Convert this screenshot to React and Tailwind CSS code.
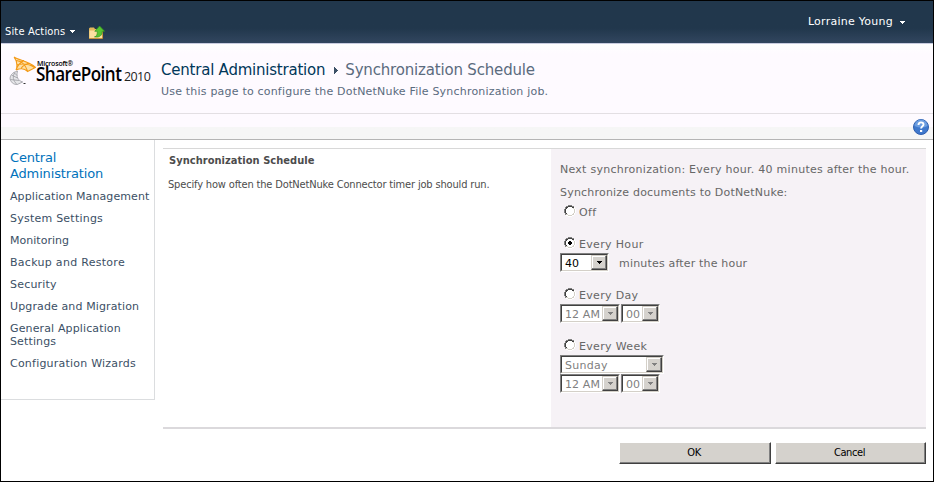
import React from 'react';

const navItems = [
  { label: 'Application Management', cls: 'tracking-[0.09px]' },
  { label: 'System Settings', cls: 'tracking-[0.23px]' },
  { label: 'Monitoring', cls: 'tracking-[0.02px]' },
  { label: 'Backup and Restore', cls: 'tracking-[0.29px]' },
  { label: 'Security', cls: 'tracking-[0.2px]' },
  { label: 'Upgrade and Migration', cls: 'tracking-[0.12px]' },
  { label: 'General Application Settings', cls: 'tracking-[0.13px]' },
  { label: 'Configuration Wizards', cls: 'tracking-[0.22px]' },
];

function Caret({ className }) {
  return (
    <svg className={className} width="5" height="3" viewBox="0 0 5 3" shapeRendering="crispEdges" fill="currentColor">
      <path d="M0 0h5v1H0zM1 1h3v1H1zM2 2h1v1H2z" />
    </svg>
  );
}

function Radio({ checked }) {
  return (
    <svg width="12" height="12" viewBox="0 0 12 12" shapeRendering="crispEdges" className="shrink-0">
      <path d="M4 1h4v1h2v2h1v4h-1v2H8v1H4v-1H2V8H1V4h1V2h2z" fill="#fff" />
      <path d="M4 0h4v1H4zM2 1h2v1H2zM8 1h2v1H8zM1 2h1v2H1zM0 4h1v4H0zM1 8h1v2H1z" fill="#808080" />
      <path d="M4 1h4v1H4zM2 2h2v1H2zM8 2h2v1H8zM2 3h1v1H2zM1 4h1v4H1zM2 8h1v1H2z" fill="#404040" />
      <path d="M9 3h1v1H9zM10 4h1v4h-1zM9 8h1v1H9zM8 9h2v1H8zM2 9h2v1H2zM4 10h4v1H4z" fill="#d4d0c8" />
      <path d="M10 2h1v2h-1zM11 4h1v4h-1zM10 8h1v2h-1zM8 10h2v1H8zM4 11h4v1H4zM2 10h2v1H2z" fill="#fff" />
      {checked && <path d="M5 4h2v1h1v2H7v1H5V7H4V5h1z" fill="#000" />}
    </svg>
  );
}

function Select({ value, width, disabled, textClass = '' }) {
  return (
    <div className={`${width} h-[19px] shrink-0 border border-t-[#808080] border-l-[#808080] border-r-white border-b-white`}>
      <div className="flex h-full border border-t-[#404040] border-l-[#404040] border-r-[#d4d0c8] border-b-[#d4d0c8] bg-white">
        <span className={`flex-1 whitespace-nowrap pl-[3px] leading-[17px] ${textClass} ${disabled ? 'text-[#808080]' : 'text-black'}`}>{value}</span>
        <span className="flex h-full w-[16px] items-center justify-center border border-t-[#d4d0c8] border-l-[#d4d0c8] border-r-[#404040] border-b-[#404040] bg-[#d5d2cd] shadow-[inset_-1px_-1px_0_#808080,inset_1px_1px_0_#fff]">
          <Caret className={disabled ? 'text-[#808080]' : 'text-black'} />
        </span>
      </div>
    </div>
  );
}

function Option({ label, checked }) {
  return (
    <div className="flex h-[16px] items-start pl-[4px]">
      <Radio checked={checked} />
      <span className="ml-[3px] whitespace-nowrap pt-px leading-[13px] tracking-[0.33px]">{label}</span>
    </div>
  );
}

function Button({ label, width }) {
  return (
    <button className={`${width} h-[22px] border border-t-white border-l-white border-r-[#404040] border-b-[#404040] bg-[#d5d2cd] pr-[2px] text-center font-['DejaVu_Sans_Condensed','DejaVu_Sans',sans-serif] text-[11px] leading-[20px] tracking-[-0.4px] text-black shadow-[inset_-1px_-1px_0_#808080]`}>
      {label}
    </button>
  );
}

function FolderIcon() {
  return (
    <svg width="17" height="15" viewBox="0 0 17 15">
      <path d="M1 3.500 2 2.500h4l1 1.500h6V13H1z" fill="#e3b75c" />
      <path d="M1.500 5.500H14v8H1.500z" fill="#fbe0a0" />
      <path d="M1 13.500h13.500V6" fill="none" stroke="#c7923a" strokeWidth="1" />
      <path d="M6.500 11.800C9 11.500 9.300 9.500 9.300 6.300H6.800L11.600 1l5 5.300h-2.400c0 4.200-2.700 6.500-7.700 5.500z" fill="#58c431" stroke="#2f9420" strokeWidth=".7" />
    </svg>
  );
}

function SharePointMark() {
  return (
    <svg width="27" height="30" viewBox="0 0 27 30">
      <path d="M5 1C7 4 8.500 8 7 14C13 11.500 16 13 18.500 15.500L26.500 11.500C20 5 12 5 5 1z" fill="#fde0a6" />
      <path d="M5 1C8 5 9 9 7 14M5 1c5 3.500 15 4 21.500 10.500L18.500 15.500C16 12.500 12 12 7 14M7.500 4.500C13 5 16.500 9 18.500 15M15 4.500C11 6.500 9 9 7.500 13M20.500 7C16 8 13.500 10 12 12.500M8.500 8.500c6-1 12-.5 17 3" fill="none" stroke="#f39a17" strokeWidth="1.100" />
      <path d="M8.500 15C3.500 16 .8 19 1 23c.8 3 3 5.500 7 5.500l6-2.500c-5-1-7.500-5-5.500-11z" fill="#e6e6e9" />
      <path d="M8.500 15C3 16.500.5 20 1.200 23.500c1.500 4 4 5 7 5l5.500-2.500C9 24.500 7 21 8.500 15zM2.500 19l6 3M1.200 23.500l9 1M5 16.500l3 3M6 16.500c-3 4-2 8 2 12" fill="none" stroke="#9c9ca2" strokeWidth=".8" />
      <path d="M14.500 27.500h2" stroke="#333" />
    </svg>
  );
}

export default function App() {
  return (
    <div className="flex h-[482px] w-[934px] flex-col overflow-hidden border border-black bg-white font-['DejaVu_Sans',Verdana,sans-serif] text-[11px] leading-[13px]">
      <header className="flex h-[43px] shrink-0 justify-between border-b border-[#c9cce0] bg-linear-to-b from-[#21374c] from-65% to-[#32465f] text-white">
        <div className="flex items-start pl-1 pt-[23px]">
          <span className="mt-px whitespace-nowrap font-['DejaVu_Sans_Condensed','DejaVu_Sans',sans-serif] tracking-[0.17px]">Site Actions</span>
          <Caret className="ml-[5px] mt-[6px]" />
          <span className="ml-[13px] mt-px"><FolderIcon /></span>
        </div>
        <div className="flex items-start pr-[28px] pt-[14px]">
          <span className="tracking-[0.26px]">Lorraine Young</span>
          <Caret className="ml-[7px] mt-[6px]" />
        </div>
      </header>

      <section className="flex h-[70px] shrink-0 border-b border-[#e3dfe3] bg-linear-to-b from-white to-[#fefaff] to-15%">
        <div className="flex w-[160px] shrink-0 pl-[8px] pt-[12px]">
          <SharePointMark />
          <div className="mt-[4px] flex flex-col font-['Open_Sans',sans-serif] text-black">
            <span className="h-[6px] pl-px text-[7px] font-semibold leading-[7px] tracking-[-0.2px]">Microsoft®</span>
            <span className="flex items-baseline whitespace-nowrap text-[19px] font-semibold leading-[17px]">
              <span className="w-[88px] origin-left scale-x-[0.9] tracking-[-0.6px]">SharePoint</span>
              <span className="origin-left scale-x-[0.96] text-[13px] font-normal tracking-[-0.600px] text-[#222]">2010</span>
            </span>
          </div>
        </div>
        <div className="flex flex-col text-[#5b6b7e]">
          <h1 className="mt-[17px] flex items-center whitespace-nowrap text-[15px] leading-[18px]">
            <span className="tracking-[-0.22px] text-[#003759]">Central Administration</span>
            <svg className="ml-[9px] mr-[7px] text-[#3b4f65]" width="4" height="7" viewBox="0 0 4 7" shapeRendering="crispEdges" fill="currentColor">
              <path d="M0 0h1v7H0zM1 1h1v5H1zM2 2h1v3H2zM3 3h1v1H3z" />
            </svg>
            <span className="tracking-[-0.18px]">Synchronization Schedule</span>
          </h1>
          <p className="mt-[6px] whitespace-nowrap tracking-[0.2px]">Use this page to configure the DotNetNuke File Synchronization job.</p>
        </div>
      </section>

      <div className="flex h-[26px] shrink-0 items-center justify-end border-b border-[#b5b5b5] bg-linear-to-b from-[#fefaff] from-50% to-[#f6f6f6] to-50% pr-[4px]">
        <svg width="16" height="16" viewBox="0 0 16 16">
          <circle cx="8" cy="8" r="7.500" fill="#3f78cc" stroke="#2f5fae" />
          <path d="M1.500 7a6.500 6.500 0 0 1 13 0q-6 3-13 0z" fill="#6c9de0" />
          <path d="M5.500 6c0-3.400 5-3.400 5-.5 0 1.700-2.400 1.700-2.400 4" fill="none" stroke="#fff" strokeWidth="1.900" />
          <path d="M7 11h2.200v2H7z" fill="#fff" />
        </svg>
      </div>

      <div className="flex flex-1">
        <nav className="h-[260px] w-[154px] shrink-0 border-r border-b border-[#dbdddf] pl-[9px] pt-[10px] text-[#3b4f65]">
          <a className="block w-[110px] text-[13px] leading-[16px] tracking-[-0.15px] text-[#0072bc]">Central Administration</a>
          <ul className="mt-[8px] flex flex-col gap-[9px]">
            {navItems.map((item) => (
              <li key={item.label} className={`${item.label.startsWith('General') ? 'w-[125px]' : 'whitespace-nowrap'} ${item.cls}`}>{item.label}</li>
            ))}
          </ul>
        </nav>

        <main className="ml-[8px] mt-[8px] w-[763px]">
          <div className="flex h-[281px] border-t border-b-2 border-[#dbd9dc] border-t-[#d8d8d8]">
            <div className="w-[388px] pl-[6px] pt-[5px] font-['DejaVu_Sans_Condensed','DejaVu_Sans',sans-serif] text-[#4c4c4c]">
              <h2 className="font-bold tracking-[0.04px]">Synchronization Schedule</h2>
              <p className="-ml-px mt-[11px] whitespace-nowrap tracking-[-0.16px]">Specify how often the DotNetNuke Connector timer job should run.</p>
            </div>
            <div className="flex-1 bg-[#f6f2f6] pl-[9px] pt-[14px] text-[#676767]">
              <p className="whitespace-nowrap tracking-[0.27px]">Next synchronization: Every hour. 40 minutes after the hour.</p>
              <p className="mt-[10px] whitespace-nowrap tracking-[0.2px]">Synchronize documents to DotNetNuke:</p>
              <div className="mt-[6px]"><Option label="Off" /></div>
              <div className="mt-[16px]"><Option label="Every Hour" checked /></div>
              <div className="flex">
                <Select value="40" width="w-[49px]" />
                <span className="ml-[10px] pt-[4px] tracking-[0.18px]">minutes after the hour</span>
              </div>
              <div className="mt-[16px]"><Option label="Every Day" /></div>
              <div className="flex gap-px">
                <Select value="12 AM" width="w-[60px]" disabled textClass="tracking-[0.1px]" />
                <Select value="00" width="w-[39px]" disabled />
              </div>
              <div className="mt-[16px]"><Option label="Every Week" /></div>
              <Select value="Sunday" width="w-[104px]" disabled textClass="tracking-[0.25px]" />
              <div className="flex gap-px">
                <Select value="12 AM" width="w-[60px]" disabled textClass="tracking-[0.1px]" />
                <Select value="00" width="w-[39px]" disabled />
              </div>
            </div>
          </div>
          <div className="mt-[13px] flex justify-end gap-[4px]">
            <Button label="OK" width="w-[152px]" />
            <Button label="Cancel" width="w-[151px]" />
          </div>
        </main>
      </div>
    </div>
  );
}
